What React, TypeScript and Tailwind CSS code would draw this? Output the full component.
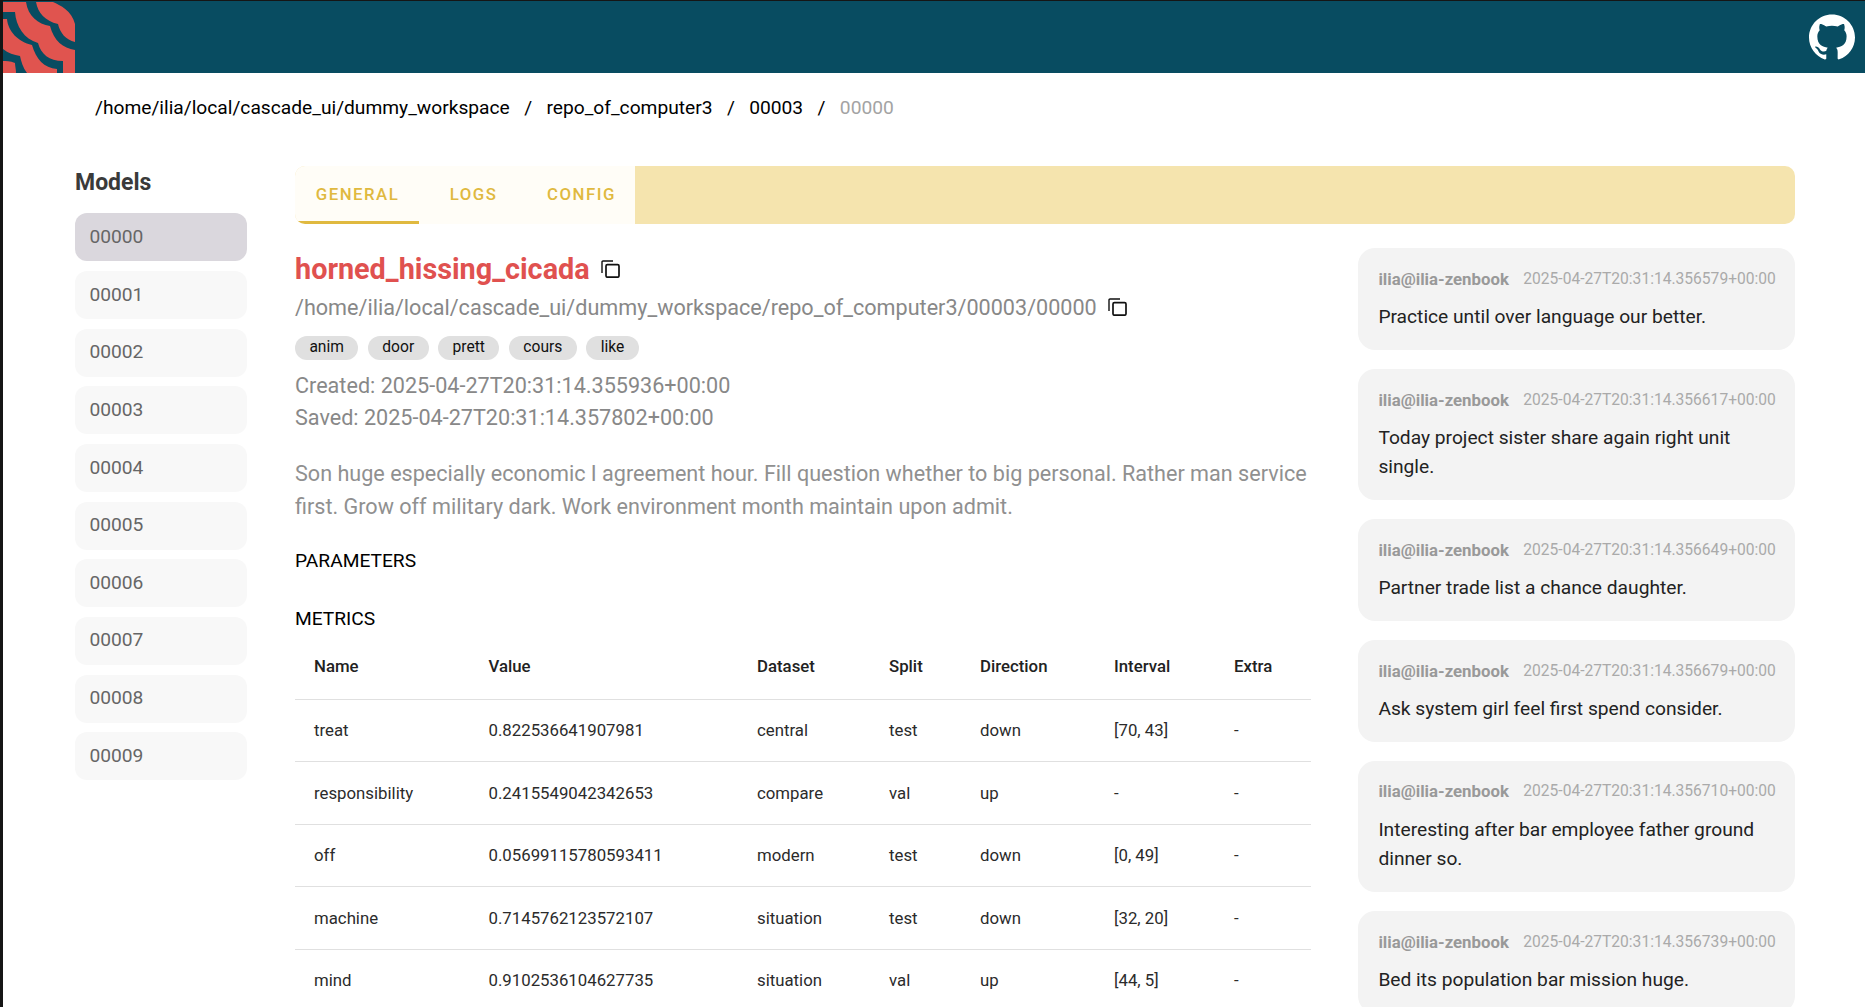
import React from 'react'

const CopyIcon = ({ className }: { className?: string }) => (
  <svg viewBox="0 0 19 18" className={className} fill="none" stroke="#111111">
    <path d="M1,13 V2 A1,1 0 0 1 2,1 H12" strokeWidth="1.4" />
    <rect x="5" y="4.6" width="13" height="12.6" rx="1.4" strokeWidth="1.7" />
  </svg>
)

const Logo = () => (
  <svg viewBox="3 1 72 71" className="h-[71px] w-[72px] shrink-0">
    <rect x="3" y="1" width="72" height="71" fill="#e0544f" />
    <g fill="#084c61">
      <path d="M53,1 C60,4 72,10 75,23 V1 Z" />
      <path d="M26,1 H36 C38,12 45,20 58,23 C60,32 66,39 75,41 V49 C63,47 54,40 50,25 C38,23 28,15 26,1 Z" />
      <path d="M3,11 H15 C16,25 24,38 38,42 C41,53 49,60 63,60 V72 H57 V68 C44,67 36,58 32,44 C18,41 8,30 7,18 H3 Z" />
      <path d="M3,48 C8,52 14,54 20,55 C21,60 23,67 27,72 H16 C16,68 15,65 15,62 C10,60 6,60 3,60 Z" />
    </g>
  </svg>
)

const GithubIcon = () => (
  <svg viewBox="0 0 24 24" className="h-[46px] w-[46px]" fill="#ffffff">
    <path d="M12 .297c-6.63 0-12 5.373-12 12 0 5.303 3.438 9.8 8.205 11.385.6.113.82-.258.82-.577 0-.285-.01-1.04-.015-2.04-3.338.724-4.042-1.61-4.042-1.61C4.422 18.07 3.633 17.7 3.633 17.7c-1.087-.744.084-.729.084-.729 1.205.084 1.838 1.236 1.838 1.236 1.07 1.835 2.809 1.305 3.495.998.108-.776.417-1.305.76-1.605-2.665-.3-5.466-1.332-5.466-5.93 0-1.31.465-2.38 1.235-3.22-.135-.303-.54-1.523.105-3.176 0 0 1.005-.322 3.3 1.23.96-.267 1.98-.399 3-.405 1.02.006 2.04.138 3 .405 2.28-1.552 3.285-1.23 3.285-1.23.645 1.653.24 2.873.12 3.176.765.84 1.23 1.91 1.23 3.22 0 4.61-2.805 5.625-5.475 5.92.42.36.81 1.096.81 2.22 0 1.606-.015 2.896-.015 3.286 0 .315.21.69.825.57C20.565 22.092 24 17.592 24 12.297c0-6.627-5.373-12-12-12" />
  </svg>
)

const models = ['00000', '00001', '00002', '00003', '00004', '00005', '00006', '00007', '00008', '00009']
const tags = ['anim', 'door', 'prett', 'cours', 'like']

const metrics = [
  ['treat', '0.822536641907981', 'central', 'test', 'down', '[70, 43]', '-'],
  ['responsibility', '0.2415549042342653', 'compare', 'val', 'up', '-', '-'],
  ['off', '0.05699115780593411', 'modern', 'test', 'down', '[0, 49]', '-'],
  ['machine', '0.7145762123572107', 'situation', 'test', 'down', '[32, 20]', '-'],
  ['mind', '0.9102536104627735', 'situation', 'val', 'up', '[44, 5]', '-'],
]

const comments = [
  ['2025-04-27T20:31:14.356579+00:00', 'Practice until over language our better.'],
  ['2025-04-27T20:31:14.356617+00:00', 'Today project sister share again right unit single.'],
  ['2025-04-27T20:31:14.356649+00:00', 'Partner trade list a chance daughter.'],
  ['2025-04-27T20:31:14.356679+00:00', 'Ask system girl feel first spend consider.'],
  ['2025-04-27T20:31:14.356710+00:00', 'Interesting after bar employee father ground dinner so.'],
  ['2025-04-27T20:31:14.356739+00:00', 'Bed its population bar mission huge.'],
]

const App: React.FC = () => {
  return (
    <div className="h-[1007px] overflow-hidden border-l-[3px] border-t border-[#151515] bg-white font-['Roboto',sans-serif] text-[19.2px]">
      <header className="flex h-[72px] items-center justify-between bg-[#084c61] pr-[10px]">
        <Logo />
        <GithubIcon />
      </header>

      <nav className="flex h-[68px] items-center pt-[2px] pl-[92px] text-black">
        <span>/home/ilia/local/cascade_ui/dummy_workspace</span>
        <span className="px-[14.4px]">/</span>
        <span>repo_of_computer3</span>
        <span className="px-[14.4px]">/</span>
        <span>00003</span>
        <span className="px-[14.4px]">/</span>
        <span className="text-[#a3a3a3]">00000</span>
      </nav>

      <main className="mt-[25px] flex pl-[72px]">
        <aside className="mr-[48px] w-[172px] shrink-0">
          <h2 className="mb-[15.4px] h-[32px] pt-[1px] text-[23px] leading-[32px] font-bold text-[#3a3a3a]">Models</h2>
          <div className="flex flex-col gap-[9.65px]">
            {models.map((m, i) => (
              <div
                key={m}
                className={
                  i === 0
                    ? 'flex h-[48px] items-center rounded-[12px] bg-[#dad7dd] px-[14.4px] text-[#666666]'
                    : 'flex h-[48px] items-center rounded-[12px] bg-[#f8f8f8] px-[14.4px] text-[#666666]'
                }
              >
                {m}
              </div>
            ))}
          </div>
        </aside>

        <section className="w-[1500px] shrink-0">
          <div className="flex h-[58px] overflow-hidden rounded-[10px] bg-[#f5e4ae] text-[16.8px] font-medium tracking-[1.49px] text-[#e0b93f]">
            <div className="flex w-[124px] items-center justify-center border-b-[3px] border-[#e0b93f] bg-[#fffdf7] pt-[3px] pl-[1px]">GENERAL</div>
            <div className="flex w-[108px] items-center justify-center bg-[#fffdf7] pl-[1px]">LOGS</div>
            <div className="flex w-[108px] items-center justify-center bg-[#fffdf7] pl-[1px]">CONFIG</div>
          </div>

          <div className="mt-[24px] flex gap-[47px]">
            <div className="w-[1016px] shrink-0">
              <div className="mt-[4px] flex h-[36px] items-center">
                <h1 className="text-[28.8px] font-bold text-[#e0514f]">horned_hissing_cicada</h1>
                <CopyIcon className="-mt-[2px] ml-[11px] h-[18px] w-[19px]" />
              </div>
              <div className="mt-[4px] flex h-[32px] items-center text-[21.6px] text-[#888888]">
                <span>/home/ilia/local/cascade_ui/dummy_workspace/repo_of_computer3/00003/00000</span>
                <CopyIcon className="-mt-[2px] ml-[11px] h-[18px] w-[19px]" />
              </div>
              <div className="mt-[12px] flex gap-[9.6px]">
                {tags.map((t) => (
                  <span key={t} className="flex h-[24px] items-center rounded-full bg-[#e0e0e0] px-[14.4px] text-[15.6px] text-[#111111]">
                    {t}
                  </span>
                ))}
              </div>
              <div className="mt-[10px] text-[21.6px] leading-[32px] text-[#888888]">
                <div>Created: 2025-04-27T20:31:14.355936+00:00</div>
                <div>Saved: 2025-04-27T20:31:14.357802+00:00</div>
              </div>
              <p className="mt-[23px] text-[21.6px] leading-[33px] text-[#909090]">
                Son huge especially economic I agreement hour. Fill question whether to big personal. Rather man service first. Grow off military dark. Work environment month maintain upon admit.
              </p>
              <div className="mt-[26px] h-[24px] leading-[24px] text-black">PARAMETERS</div>
              <div className="mt-[34px] h-[24px] leading-[24px] text-black">METRICS</div>

              <table className="mt-[4px] w-full table-fixed border-collapse text-left text-[16.8px] text-[#2b2b2b]">
                <thead>
                  <tr className="h-[64.4px] border-b border-[#e0e0e0] font-medium text-[#222222]">
                    <th className="w-[174.5px] pl-[19px] font-medium">Name</th>
                    <th className="w-[268.5px] pl-[19px] font-medium">Value</th>
                    <th className="w-[132px] pl-[19px] font-medium">Dataset</th>
                    <th className="w-[91px] pl-[19px] font-medium">Split</th>
                    <th className="w-[134px] pl-[19px] font-medium">Direction</th>
                    <th className="w-[120px] pl-[19px] font-medium">Interval</th>
                    <th className="pl-[19px] font-medium">Extra</th>
                  </tr>
                </thead>
                <tbody>
                  {metrics.map((row) => (
                    <tr key={row[0]} className="h-[62.5px] border-b border-[#e0e0e0]">
                      {row.map((cell, i) => (
                        <td key={i} className="pl-[19px]">
                          {cell}
                        </td>
                      ))}
                    </tr>
                  ))}
                </tbody>
              </table>
            </div>

            <div className="flex w-[437px] shrink-0 flex-col gap-[19px]">
              {comments.map(([date, text]) => (
                <div key={date} className="rounded-[17px] bg-[#f3f3f3] pt-[19px] pr-[20px] pb-[18px] pl-[20.4px]">
                  <div className="flex h-[24px] items-center pt-[1px] whitespace-nowrap">
                    <span className="text-[16.8px] font-bold text-[#999999]">ilia@ilia-zenbook</span>
                    <span className="ml-[14.4px] text-[15.6px] text-[#aaaaaa]">{date}</span>
                  </div>
                  <p className="mt-[11px] leading-[29.7px] text-[#222222]">{text}</p>
                </div>
              ))}
            </div>
          </div>
        </section>
      </main>
    </div>
  )
}

export default App
